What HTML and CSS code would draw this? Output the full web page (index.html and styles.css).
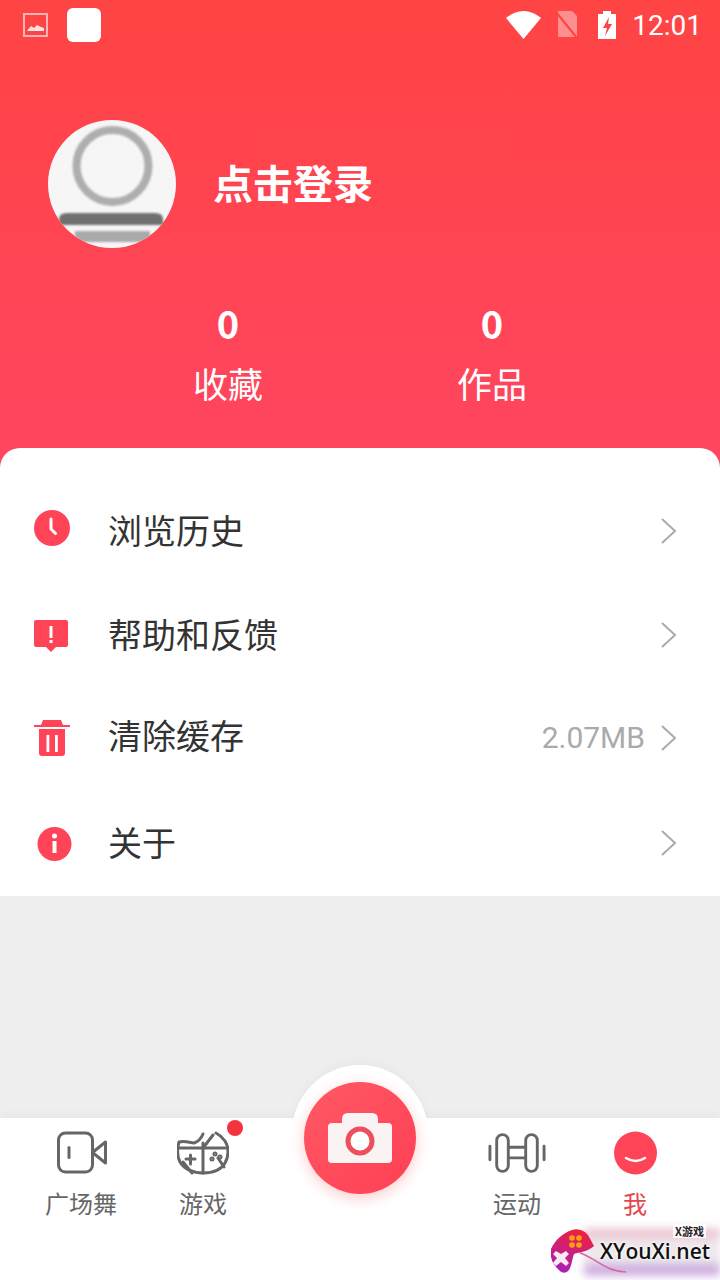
FILE: index.html
```html
<!DOCTYPE html>
<html lang="zh-CN">
<head>
    <meta charset="UTF-8">
    <meta name="viewport" content="width=device-width, initial-scale=1.0">
    <title>我的</title>
    <link rel="stylesheet" href="styles.css">
</head>
<body>
<div class="page">
    <header class="profile">
        <div class="status-bar">
            <svg class="st-image" viewBox="0 0 25 24">
                <rect x="1" y="1" width="23" height="22" fill="none" stroke="#fff" stroke-opacity=".6" stroke-width="2"/>
                <path d="M4 18l4-5 3 2 3-3 4 2 3 1v3z" fill="#fff" fill-opacity=".85"/>
            </svg>
            <div class="st-square"></div>
            <div class="st-spacer"></div>
            <svg class="st-wifi" viewBox="0 0 35 28"><path d="M0 7C5 3 11 0 17.5 0S30 3 35 7L17.5 28z" fill="#fff"/></svg>
            <svg class="st-sim" viewBox="0 0 26 28">
                <path d="M4 0h14l5 5v21H4z" fill="#fff" fill-opacity=".4"/>
                <path d="M2 1l21 26" stroke="#ff4444" stroke-width="2"/>
            </svg>
            <svg class="st-battery" viewBox="0 0 18 28">
                <path d="M5 0h8v3h5v25H0V3h5z" fill="#fff"/>
                <path d="M11 6l-6 11h4l-2 8 7-12h-4z" fill="#ff4444"/>
            </svg>
            <span class="st-time">12:01</span>
        </div>
        <div class="user">
            <div class="avatar">
                <svg viewBox="0 0 128 128">
                    <defs><filter id="soft"><feGaussianBlur stdDeviation="1"/></filter></defs>
                    <g filter="url(#soft)">
                        <circle cx="64.5" cy="46" r="36" fill="none" stroke="#aeaeae" stroke-width="8"/>
                        <path d="M11 105V99q0-6 8-6h88q8 0 8 6v6z" fill="#6f6f6f"/>
                        <rect x="27" y="111" width="75" height="11" fill="#aaa"/>
                    </g>
                </svg>
            </div>
            <div class="login">点击登录</div>
        </div>
        <div class="stats">
            <div class="stat"><b>0</b><span>收藏</span></div>
            <div class="stat"><b>0</b><span>作品</span></div>
        </div>
    </header>

    <section class="menu">
        <div class="row">
            <svg class="row-icon" viewBox="0 0 40 40">
                <circle cx="20" cy="17" r="18" fill="#ff4458"/>
                <path d="M19 8v10l4.5 4.5" fill="none" stroke="#fff" stroke-width="3" stroke-linecap="round" stroke-linejoin="round"/>
            </svg>
            <span class="row-label">浏览历史</span>
            <svg class="chevron" viewBox="0 0 16 26"><path d="M1 1l13 12L1 25" fill="none" stroke="#aaa" stroke-width="2"/></svg>
        </div>
        <div class="row">
            <svg class="row-icon" viewBox="0 0 40 40">
                <path d="M2 7q0-2 2-2h30q2 0 2 2v23q0 2-2 2H24l-5 5-5-5H4q-2 0-2-2z" fill="#ff4458"/>
                <rect x="17.5" y="11" width="3" height="12" fill="#fff"/>
                <rect x="17.5" y="25" width="3" height="3" fill="#fff"/>
            </svg>
            <span class="row-label">帮助和反馈</span>
            <svg class="chevron" viewBox="0 0 16 26"><path d="M1 1l13 12L1 25" fill="none" stroke="#aaa" stroke-width="2"/></svg>
        </div>
        <div class="row row-cache">
            <svg class="row-icon" viewBox="0 0 40 40">
                <path d="M2 6h7l2-5h18l2 5h7v2H2z" fill="#ff4458"/>
                <path d="M7 10h26v24q0 3-3 3H10q-3 0-3-3z" fill="#ff4458"/>
                <rect x="14.5" y="16" width="2.8" height="17" fill="#fff"/>
                <rect x="23" y="16" width="2.8" height="17" fill="#fff"/>
            </svg>
            <span class="row-label">清除缓存</span>
            <span class="row-value">2.07MB</span>
            <svg class="chevron" viewBox="0 0 16 26"><path d="M1 1l13 12L1 25" fill="none" stroke="#aaa" stroke-width="2"/></svg>
        </div>
        <div class="row">
            <svg class="row-icon" viewBox="0 0 40 40">
                <circle cx="22.5" cy="21" r="17" fill="#ff4458"/>
                <circle cx="22.5" cy="13" r="2.5" fill="#fff"/>
                <rect x="20.5" y="18" width="4" height="12" fill="#fff"/>
            </svg>
            <span class="row-label">关于</span>
            <svg class="chevron" viewBox="0 0 16 26"><path d="M1 1l13 12L1 25" fill="none" stroke="#aaa" stroke-width="2"/></svg>
        </div>
    </section>

    <div class="blank"></div>

    <nav class="tabbar">
        <div class="bump"></div>
        <div class="tab">
            <svg class="tab-icon" viewBox="0 0 52 44" fill="none" stroke="#666" stroke-width="3" stroke-linejoin="round">
                <rect x="3.5" y="2" width="34" height="39" rx="7"/>
                <path d="M37.5 21.5l13-10.5v21z"/>
                <path d="M14 16.5v10" stroke-linecap="round"/>
            </svg>
            <span>广场舞</span>
        </div>
        <div class="tab">
            <svg class="tab-icon" viewBox="0 0 52 44" fill="none" stroke="#666" stroke-width="3" stroke-linecap="round" stroke-linejoin="round">
                <path d="M26 12v30M2 17h46"/>
                <path d="M26 3c-2 5-6 8-9 9-4 0-9-3-15-1-2 7-2 14 1 20 4 7 13 11 23 11s18-3 22-10c4-7 4-16 0-22-2-3-5-6-9-8"/>
                <path d="M9 28h9M13.5 24v9M6 31l9 11M41 27l6 9M26 17l10-13"/>
                <circle cx="38" cy="23" r="1"/><circle cx="43" cy="26" r="1"/><circle cx="35" cy="28" r="1"/>
            </svg>
            <i class="badge"></i>
            <span>游戏</span>
        </div>
        <div class="shoot">
            <svg viewBox="0 0 64 52">
                <path d="M4 11h10V7q0-6 6-6h24q6 0 6 6v4h10q4 0 4 4v32q0 4-4 4H4q-4 0-4-4V15q0-4 4-4z" fill="#f9f3f3"/>
                <circle cx="32" cy="29" r="12" fill="#fff" stroke="#ef4f5c" stroke-width="5"/>
            </svg>
        </div>
        <div class="tab">
            <svg class="tab-icon" viewBox="0 0 60 44" fill="none" stroke="#666" stroke-width="3" stroke-linecap="round">
                <rect x="9" y="3" width="12" height="38" rx="6"/>
                <rect x="39" y="3" width="12" height="38" rx="6"/>
                <path d="M21 16h18M21 27h18M2 15v14M58 15v14"/>
            </svg>
            <span>运动</span>
        </div>
        <div class="tab tab-on">
            <svg class="tab-icon" viewBox="0 0 52 44">
                <circle cx="26.5" cy="22" r="21.5" fill="#ff4458"/>
                <path d="M17 27q9.5 6 19 0" fill="none" stroke="#fff" stroke-width="2.5" stroke-linecap="round"/>
            </svg>
            <span>我</span>
        </div>
        <div class="mark">
            <div class="mark-glow"></div>
            <svg class="mark-logo" viewBox="0 0 46 50">
                <defs>
                    <linearGradient id="padfill" x1="0.6" y1="0" x2="0.3" y2="1">
                        <stop offset="0" stop-color="#f0203c"/>
                        <stop offset="1" stop-color="#a81fb8"/>
                    </linearGradient>
                </defs>
                <path d="M30 26c14 4 26 19 46 19" fill="none" stroke="#d763a8" stroke-width="1.5"/>
                <path d="M1 22C5 13 13 6 22 3c6-2 12 0 16 5l6 11c-7 6-14 6-20 8-2 5-2 10-4 14-2 5-7 6-10 3C5 40 2 35 1 30z" fill="url(#padfill)"/>
                <path d="M6 24l5 3 5-3 3 3-4 4 4 5-3 3-5-4-5 4-3-3 4-5-4-4z" fill="#f9e9f2"/>
                <g fill="#ffa30f">
                    <circle cx="22" cy="11" r="2.8"/><circle cx="29" cy="11" r="2.8"/>
                    <circle cx="22" cy="18" r="2.8"/><circle cx="29" cy="18" r="2.8"/>
                </g>
            </svg>
            <span class="mark-small">X游戏</span>
            <span class="mark-name">XYouXi.net</span>
        </div>
    </nav>
</div>
</body>
</html>
```

FILE: styles.css
```css
* {
    box-sizing: border-box;
}
body {
    margin: 0;
    font-family: "Noto Sans CJK SC", "Noto Sans", sans-serif;
    background: #fff;
}
.page {
    width: 720px;
    height: 1280px;
    display: flex;
    flex-direction: column;
    overflow: hidden;
}

/* header */
.profile {
    height: 470px;
    flex: none;
    background: linear-gradient(180deg, #ff4444 0%, #ff4560 100%);
    color: #fff;
}
.status-bar {
    height: 50px;
    display: flex;
    align-items: center;
    padding: 0 18px 0 23px;
}
.st-image {
    width: 25px;
    height: 24px;
}
.st-square {
    width: 34px;
    height: 34px;
    margin-left: 19px;
    background: #fff;
    border-radius: 6px;
}
.st-spacer {
    flex: 1;
}
.st-wifi {
    width: 35px;
    height: 28px;
}
.st-sim {
    width: 26px;
    height: 28px;
    margin-left: 13px;
}
.st-battery {
    width: 18px;
    height: 28px;
    margin-left: 18px;
}
.st-time {
    font-family: Roboto, sans-serif;
    font-size: 28px;
    margin-left: 16px;
}
.user {
    display: flex;
    align-items: center;
    margin-top: 70px;
    padding-left: 48px;
}
.avatar {
    width: 128px;
    height: 128px;
    border-radius: 50%;
    background: #f6f6f7;
    overflow: hidden;
}
.avatar svg {
    display: block;
    width: 128px;
    height: 128px;
}
.login {
    margin-left: 37px;
    margin-bottom: 4px;
    font-size: 40px;
    font-weight: 700;
    line-height: 56px;
}
.stats {
    display: grid;
    grid-template-columns: 264px 264px;
    padding-left: 96px;
    margin-top: 49px;
}
.stat {
    display: flex;
    flex-direction: column;
    align-items: center;
}
.stat b {
    font-size: 38px;
    line-height: 52px;
}
.stat span {
    font-size: 35px;
    line-height: 50px;
    margin-top: 9px;
}

/* menu */
.menu {
    flex: none;
    height: 448px;
    margin-top: -22px;
    padding-top: 31px;
    background: #fff;
    border-radius: 20px 20px 0 0;
    position: relative;
}
.row {
    height: 104px;
    display: flex;
    align-items: center;
    padding: 0 43px 0 32px;
}
.row-icon {
    width: 40px;
    height: 40px;
    flex: none;
    overflow: visible;
}
.row-label {
    flex: 1;
    margin: 0 0 4px 36px;
    font-size: 34px;
    color: #333;
}
.row-cache .row-label {
    margin-bottom: 9px;
}
.row-cache .chevron {
    margin-bottom: 2px;
}
.row-value {
    font-family: Roboto, sans-serif;
    font-size: 30px;
    color: #aaa;
    margin: 0 16px 3px 0;
}
.chevron {
    width: 16px;
    height: 26px;
}
.blank {
    flex: 1;
    background: #eee;
}

/* bottom tabs */
.tabbar {
    flex: none;
    height: 162px;
    position: relative;
    display: grid;
    grid-template-columns: 122px 122px 192px 122px 114px;
    padding-left: 20px;
    background: #fff;
    box-shadow: 0 -3px 10px rgba(0, 0, 0, .035);
}
.bump {
    position: absolute;
    left: 292px;
    top: -53px;
    width: 136px;
    height: 136px;
    border-radius: 50%;
    background: #fff;
    box-shadow: 0 -3px 10px rgba(0, 0, 0, .03);
    clip-path: inset(-20px -20px 80px -20px);
}
.tab {
    position: relative;
    display: flex;
    flex-direction: column;
    align-items: center;
    padding-top: 13px;
    font-size: 24px;
    color: #666;
}
.tab-icon {
    width: 52px;
    height: 44px;
}
.tab:nth-child(5) .tab-icon {
    width: 58px;
}
.tab span {
    line-height: 34px;
    margin-top: 11px;
}
.tab-on span {
    color: #e2474f;
}
.badge {
    position: absolute;
    left: 85px;
    top: 2px;
    width: 16px;
    height: 16px;
    border-radius: 50%;
    background: #f5333f;
}
.shoot {
    position: relative;
    width: 112px;
    height: 112px;
    margin: -36px 0 0 40px;
    border-radius: 50%;
    background: linear-gradient(135deg, #ff5964, #ff3f55);
    box-shadow: 0 4px 14px rgba(255, 80, 90, .3);
    display: flex;
    align-items: center;
    justify-content: center;
}
.shoot svg {
    width: 64px;
    height: 52px;
}

/* watermark */
.mark {
    position: absolute;
    left: 550px;
    top: 106px;
    width: 170px;
    height: 56px;
}
.mark-glow {
    position: absolute;
    left: 34px;
    top: 5px;
    width: 136px;
    height: 46px;
    background: linear-gradient(180deg, #e6aec0 0%, #f0e4ea 25%, #ececec 65%, #bd8cd6 100%);
    filter: blur(4px);
}
.mark-logo {
    position: absolute;
    left: 0;
    top: 3px;
    width: 46px;
    height: 50px;
    overflow: visible;
}
.mark-small {
    position: absolute;
    right: 14px;
    top: 0;
    font-size: 11px;
    font-weight: 700;
    line-height: 14px;
    color: #222;
    background: rgba(255, 255, 255, .85);
    padding: 0 2px;
}
.mark-name {
    position: absolute;
    left: 50px;
    top: 13px;
    font-family: "Open Sans", sans-serif;
    font-size: 21px;
    font-weight: 600;
    line-height: 28px;
    color: #111;
    text-shadow: 0 0 3px #fff, 0 0 3px #fff;
}
```
